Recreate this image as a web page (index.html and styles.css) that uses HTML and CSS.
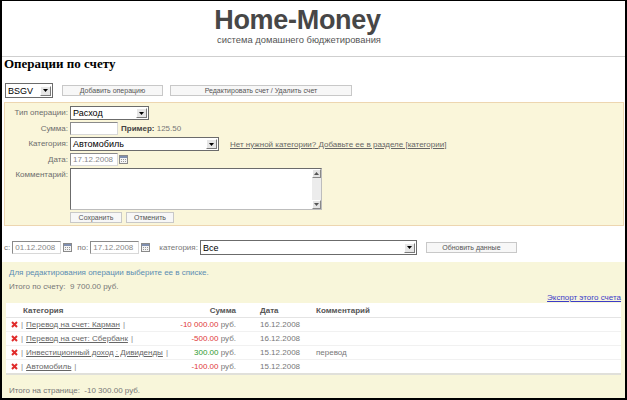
FILE: index.html
```html
<!DOCTYPE html>
<html lang="ru">
<head>
<meta charset="utf-8">
<title>Home-Money</title>
<link rel="stylesheet" href="styles.css">
</head>
<body>
<div class="page">
  <header class="hdr">
    <div class="brand">
      <div class="logo">Home-Money</div>
      <div class="slogan">система домашнего бюджетирования</div>
    </div>
  </header>

  <h1 class="title">Операции по счету</h1>

  <div class="toolbar">
    <span class="sel sel-acc"><span class="sel-val">BSGV</span><span class="arr"><svg width="5" height="3" viewBox="0 0 5 3"><path d="M0 0h5L2.5 3z" fill="#000"/></svg></span></span>
    <span class="btn btn-add">Добавить операцию</span>
    <span class="btn btn-edit">Редактировать счет / Удалить счет</span>
  </div>

  <div class="form-panel">
    <div class="frow">
      <span class="lbl">Тип операции:</span>
      <span class="sel sel-type"><span class="sel-val">Расход</span><span class="arr"><svg width="5" height="3" viewBox="0 0 5 3"><path d="M0 0h5L2.5 3z" fill="#000"/></svg></span></span>
    </div>
    <div class="frow">
      <span class="lbl">Сумма:</span>
      <span class="inp inp-sum"></span>
      <span class="example"><b>Пример:</b> 125.50</span>
    </div>
    <div class="frow">
      <span class="lbl">Категория:</span>
      <span class="sel sel-cat"><span class="sel-val">Автомобиль</span><span class="arr"><svg width="5" height="3" viewBox="0 0 5 3"><path d="M0 0h5L2.5 3z" fill="#000"/></svg></span></span>
      <a class="catlink" href="#">Нет нужной категории? Добавьте ее в разделе [категории]</a>
    </div>
    <div class="frow">
      <span class="lbl">Дата:</span>
      <span class="inp inp-date">17.12.2008</span>
      <span class="cal"><svg width="9" height="9" viewBox="0 0 9 9"><rect x="0.5" y="0.5" width="8" height="8" fill="#f4f4f4" stroke="#8a8a8a"/><rect x="1" y="1" width="7" height="2" fill="#7f8fb0"/><path d="M2 4.5h1M4 4.5h1M6 4.5h1M2 6.5h1M4 6.5h1M6 6.5h1" stroke="#999"/></svg></span>
    </div>
    <div class="frow frow-top">
      <span class="lbl">Комментарий:</span>
      <span class="textarea"><span class="ta-body"></span><span class="scroll"><span class="sb-btn"><svg width="5" height="3" viewBox="0 0 5 3"><path d="M0 3h5L2.5 0z" fill="#555"/></svg></span><span class="sb-btn"><svg width="5" height="3" viewBox="0 0 5 3"><path d="M0 0h5L2.5 3z" fill="#555"/></svg></span></span></span>
    </div>
    <div class="frow frow-btns">
      <span class="lbl"></span>
      <span class="btn btn-save">Сохранить</span>
      <span class="btn btn-cancel">Отменить</span>
    </div>
  </div>

  <div class="filter">
    <span class="flbl">с:</span>
    <span class="inp inp-f">01.12.2008</span>
    <span class="cal"><svg width="9" height="9" viewBox="0 0 9 9"><rect x="0.5" y="0.5" width="8" height="8" fill="#f4f4f4" stroke="#8a8a8a"/><rect x="1" y="1" width="7" height="2" fill="#7f8fb0"/><path d="M2 4.5h1M4 4.5h1M6 4.5h1M2 6.5h1M4 6.5h1M6 6.5h1" stroke="#999"/></svg></span>
    <span class="flbl flbl-to">по:</span>
    <span class="inp inp-f">17.12.2008</span>
    <span class="cal"><svg width="9" height="9" viewBox="0 0 9 9"><rect x="0.5" y="0.5" width="8" height="8" fill="#f4f4f4" stroke="#8a8a8a"/><rect x="1" y="1" width="7" height="2" fill="#7f8fb0"/><path d="M2 4.5h1M4 4.5h1M6 4.5h1M2 6.5h1M4 6.5h1M6 6.5h1" stroke="#999"/></svg></span>
    <span class="flbl flbl-cat">категория:</span>
    <span class="sel sel-fcat"><span class="sel-val">Все</span><span class="arr"><svg width="5" height="3" viewBox="0 0 5 3"><path d="M0 0h5L2.5 3z" fill="#000"/></svg></span></span>
    <span class="btn btn-refresh">Обновить данные</span>
  </div>

  <div class="info">
    <p class="hint">Для редактирования операции выберите ее в списке.</p>
    <p class="total">Итого по счету:&nbsp; 9 700.00 руб.</p>
    <div class="export"><a href="#">Экспорт этого счета</a></div>
    <table class="ops">
      <colgroup><col class="c1"><col class="c2"><col class="c3"><col class="c4"></colgroup>
      <thead>
        <tr><th class="th-cat">Категория</th><th class="th-sum">Сумма</th><th class="th-date">Дата</th><th class="th-com">Комментарий</th></tr>
      </thead>
      <tbody>
        <tr>
          <td class="td-cat"><span class="del"><svg width="7" height="7" viewBox="0 0 7 7"><path d="M1 1l5 5M6 1L1 6" stroke="#e02b2b" stroke-width="2"/></svg></span><span class="sep">|</span><a href="#">Перевод на счет: Карман</a><span class="sep">|</span></td>
          <td class="td-sum"><span class="neg">-10 000.00</span> руб.</td>
          <td class="td-date">16.12.2008</td>
          <td class="td-com"></td>
        </tr>
        <tr>
          <td class="td-cat"><span class="del"><svg width="7" height="7" viewBox="0 0 7 7"><path d="M1 1l5 5M6 1L1 6" stroke="#e02b2b" stroke-width="2"/></svg></span><span class="sep">|</span><a href="#">Перевод на счет: Сбербанк</a><span class="sep">|</span></td>
          <td class="td-sum"><span class="neg">-500.00</span> руб.</td>
          <td class="td-date">16.12.2008</td>
          <td class="td-com"></td>
        </tr>
        <tr>
          <td class="td-cat"><span class="del"><svg width="7" height="7" viewBox="0 0 7 7"><path d="M1 1l5 5M6 1L1 6" stroke="#e02b2b" stroke-width="2"/></svg></span><span class="sep">|</span><a href="#">Инвестиционный доход : Дивиденды</a><span class="sep">|</span></td>
          <td class="td-sum"><span class="pos">300.00</span> руб.</td>
          <td class="td-date">15.12.2008</td>
          <td class="td-com">перевод</td>
        </tr>
        <tr>
          <td class="td-cat"><span class="del"><svg width="7" height="7" viewBox="0 0 7 7"><path d="M1 1l5 5M6 1L1 6" stroke="#e02b2b" stroke-width="2"/></svg></span><span class="sep">|</span><a href="#">Автомобиль</a><span class="sep">|</span></td>
          <td class="td-sum"><span class="neg">-100.00</span> руб.</td>
          <td class="td-date">15.12.2008</td>
          <td class="td-com"></td>
        </tr>
      </tbody>
    </table>
    <p class="ptotal">Итого на странице:&nbsp; -10 300.00 руб.</p>
  </div>
</div>
</body>
</html>
```

FILE: styles.css
```css
html, body {
  margin: 0;
  padding: 0;
  background: #fff;
}
body {
  font-family: "Liberation Sans", Arial, sans-serif;
  font-size: 8px;
  color: #666;
}
.page {
  width: 627px;
  height: 400px;
  box-sizing: border-box;
  border-top: 1px solid #000;
  border-left: 2px solid #000;
  border-right: 2px solid #000;
  border-bottom: 2px solid #000;
  display: flex;
  flex-direction: column;
  overflow: hidden;
}

/* header */
.hdr {
  height: 56px;
  flex: none;
  box-sizing: border-box;
  border-bottom: 1px solid #cfcfcf;
  padding-top: 6px;
}
.brand {
  margin-left: 212px;
  display: inline-block;
  text-align: center;
}
.logo {
  font-size: 27px;
  line-height: 27px;
  font-weight: bold;
  color: #474747;
  letter-spacing: -0.3px;
}
.slogan {
  font-size: 9.4px;
  line-height: 12px;
  color: #555;
  white-space: nowrap;
  padding-left: 3px;
}

.title {
  font-family: "Liberation Serif", "Times New Roman", serif;
  font-size: 13px;
  line-height: 15px;
  font-weight: bold;
  color: #000;
  margin: -1px 0 0 2px;
}

/* common controls */
.sel {
  display: inline-flex;
  align-items: center;
  justify-content: space-between;
  box-sizing: border-box;
  height: 14px;
  border: 1px solid #6b6b6b;
  background: #fff;
  padding: 0 1px 0 2px;
  font-size: 9px;
  color: #000;
}
.sel-val {
  line-height: 12px;
}
.arr {
  width: 11px;
  height: 10px;
  box-sizing: border-box;
  background: #e6e6e6;
  border: 1px solid;
  border-color: #fff #7a7a7a #7a7a7a #fff;
  display: flex;
  align-items: center;
  justify-content: center;
}
.arr svg { display: block; }

.btn {
  display: inline-flex;
  align-items: center;
  justify-content: center;
  box-sizing: border-box;
  height: 11px;
  border: 1px solid #c8c8c8;
  background: #f7f7f7;
  font-size: 7px;
  color: #555;
}
.inp {
  display: inline-flex;
  align-items: center;
  box-sizing: border-box;
  height: 13px;
  background: #fff;
  border: 1px solid;
  border-color: #8a8a8a #d8d8d8 #d8d8d8 #8a8a8a;
  padding-left: 2px;
  font-size: 8px;
  color: #888;
}
.cal {
  display: inline-flex;
  width: 9px;
  height: 9px;
}
.cal svg { display: block; }

/* toolbar */
.toolbar {
  display: flex;
  align-items: center;
  margin: 12px 0 0 3px;
  height: 15px;
  flex: none;
}
.sel-acc {
  width: 48px;
  height: 15px;
}
.btn-add {
  width: 101px;
  margin-left: 9px;
}
.btn-edit {
  width: 182px;
  margin-left: 7px;
}

/* form panel */
.form-panel {
  flex: none;
  margin: 4px 1px 0 2px;
  background: #faf6da;
  border: 1px solid #edd6b0;
  padding: 3px 0 2px 0;
  display: flex;
  flex-direction: column;
  gap: 2px;
}
.frow {
  display: flex;
  align-items: center;
}
.frow-top {
  align-items: flex-start;
}
.lbl {
  width: 63px;
  margin-right: 2px;
  text-align: right;
  color: #6d6d6d;
  flex: none;
  line-height: 10px;
}
.frow-top .lbl { padding-top: 2px; }
.frow-btns { height: 11px; }
.sel-type { width: 79px; }
.sel-cat { width: 149px; }
.inp-sum { width: 48px; }
.example {
  margin-left: 3px;
  color: #777;
}
.example b { color: #444; }
.catlink {
  margin-left: 11px;
  color: #666;
  text-decoration: underline;
}
.inp-date { width: 48px; }
.frow .cal { margin-left: 1px; }
.textarea {
  display: flex;
  width: 252px;
  height: 42px;
  box-sizing: border-box;
  border: 1px solid;
  border-color: #6b6b6b #bdbdbd #bdbdbd #6b6b6b;
  background: #fff;
}
.ta-body { flex: 1; }
.scroll {
  width: 9px;
  background: #ececec;
  display: flex;
  flex-direction: column;
  justify-content: space-between;
}
.sb-btn {
  height: 9px;
  box-sizing: border-box;
  background: #e4e4e4;
  border: 1px solid;
  border-color: #fff #888 #888 #fff;
  display: flex;
  align-items: center;
  justify-content: center;
}
.sb-btn svg { display: block; }
.btn-save { width: 52px; }
.btn-cancel { width: 48px; margin-left: 4px; }

/* filter */
.filter {
  flex: none;
  display: flex;
  align-items: center;
  margin: 14px 0 0 2px;
  height: 15px;
}
.flbl { color: #777; margin-right: 2px; }
.inp-f { width: 49px; }
.filter .cal { margin-left: 2px; }
.flbl-to { margin-left: 5px; }
.flbl-cat { margin-left: 9px; }
.sel-fcat { width: 217px; height: 15px; }
.btn-refresh { width: 91px; margin-left: 9px; }

/* info panel */
.info {
  flex: 1;
  margin-top: 7px;
  background: #f8f6da;
  padding: 4px 4px 0 4px;
  display: flex;
  flex-direction: column;
}
.hint {
  margin: 0 0 0 3px;
  line-height: 14px;
  color: #5b8db2;
}
.total {
  margin: 0 0 0 3px;
  line-height: 14px;
  color: #777;
}
.export {
  text-align: right;
  line-height: 10px;
  margin-top: -1px;
}
.export a {
  color: #3c3cc8;
  text-decoration: underline;
}
.ops {
  width: 100%;
  table-layout: fixed;
  border-collapse: collapse;
  background: #fff;
  border-bottom: 2px solid #e0e0da;
}
.c1 { width: 150px; }
.c2 { width: 84px; }
.c3 { width: 76px; }
.ops th {
  height: 14px;
  padding: 0;
  text-align: left;
  font-weight: bold;
  color: #555;
  border-bottom: 1px solid #e4e4e4;
}
.ops td {
  height: 13px;
  line-height: 13px;
  padding: 0;
  color: #777;
  border-bottom: 1px solid #f1f1f1;
  white-space: nowrap;
}
.th-cat { padding-left: 17px !important; }
.th-sum, .td-sum { text-align: right !important; padding-right: 4px !important; }
.th-date, .td-date { padding-left: 20px !important; }
.td-cat { padding-left: 5px !important; }
.del {
  display: inline-block;
  width: 7px;
  height: 7px;
  vertical-align: -1px;
}
.del svg { display: block; }
.sep {
  color: #888;
  margin: 0 3px;
}
.td-cat a {
  color: #666;
  text-decoration: underline;
}
.neg { color: #e03a3a; }
.pos { color: #2f9a2f; }
.ptotal {
  margin: 11px 0 0 3px;
  color: #777;
}
```
